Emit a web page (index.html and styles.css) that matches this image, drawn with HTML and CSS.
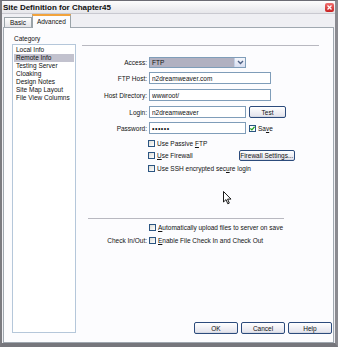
FILE: index.html
```html
<!DOCTYPE html>
<html lang="en">
<head>
<meta charset="UTF-8">
<title>Site Definition for Chapter45</title>
<link rel="stylesheet" href="styles.css">
</head>
<body>
<div class="window">
  <div class="titlebar">
    <span class="title">Site Definition for Chapter45</span>
    <span class="close">
      <svg width="9" height="9" viewBox="0 0 9 9"><path d="M2.5 2.5 L6.5 6.5 M6.5 2.5 L2.5 6.5" stroke="#fff" stroke-width="1.3"/></svg>
    </span>
  </div>
  <div class="tabs">
    <span class="tab">Basic</span>
    <span class="tab active">Advanced</span>
  </div>
  <div class="panel">
    <div class="sidebar">
      <div class="cat">Category</div>
      <ul class="list">
        <li>Local Info</li>
        <li class="sel">Remote Info</li>
        <li>Testing Server</li>
        <li>Cloaking</li>
        <li>Design Notes</li>
        <li>Site Map Layout</li>
        <li>File View Columns</li>
      </ul>
    </div>
    <div class="main">
      <div class="rule"></div>

      <div class="row r-access">
        <span class="lbl">Access:</span>
        <span class="select"><span class="val">FTP</span><span class="arrow"><svg width="7" height="5" viewBox="0 0 7 5"><path d="M1 1 L3.5 3.5 L6 1" fill="none" stroke="#4d6185" stroke-width="1.4"/></svg></span></span>
      </div>
      <div class="row r-host">
        <span class="lbl">FTP Host:</span>
        <input class="field wide" type="text" value="n2dreamweaver.com">
      </div>
      <div class="row r-dir">
        <span class="lbl">Host Directory:</span>
        <input class="field wide" type="text" value="wwwroot/">
      </div>
      <div class="row r-login">
        <span class="lbl">Login:</span>
        <input class="field" type="text" value="n2dreamweaver">
        <button class="btn test">Test</button>
      </div>
      <div class="row r-pass">
        <span class="lbl">Password:</span>
        <input class="field" type="password" value="secret">
        <span class="box on"><svg width="5" height="5" viewBox="0 0 5 5"><path d="M0.4 2.4 L1.9 3.9 L4.6 0.8" fill="none" stroke="#21a121" stroke-width="1.3"/></svg></span>
        <span class="txt">Sa<u>v</u>e</span>
      </div>

      <div class="opts">
        <div class="opt"><span class="box"></span><span class="txt">Use Passive <u>F</u>TP</span></div>
        <div class="opt"><span class="box"></span><span class="txt"><u>U</u>se Firewall</span><button class="btn fw">Firewall Settings...</button></div>
        <div class="opt"><span class="box"></span><span class="txt">Use SSH encrypted sec<u>u</u>re login</span></div>
      </div>

      <div class="rule short"></div>

      <div class="row r-auto">
        <span class="lbl"></span>
        <span class="box"></span><span class="txt"><u>A</u>utomatically upload files to server on save</span>
      </div>
      <div class="row r-check">
        <span class="lbl">Check In/Out:</span>
        <span class="box"></span><span class="txt"><u>E</u>nable File Check In and Check Out</span>
      </div>

      <div class="footer">
        <button class="btn">OK</button>
        <button class="btn">Cancel</button>
        <button class="btn">Help</button>
      </div>
    </div>
  </div>
  <svg class="cursor" width="9" height="14" viewBox="0 0 9 14"><path d="M0.5 0.5 L0.5 11 L3 8.6 L4.8 12.8 L6.3 12.1 L4.6 8.1 L8 8.1 Z" fill="#fff" stroke="#000" stroke-width="0.9"/></svg>
</div>
</body>
</html>
```
FILE: styles.css
```css
body {
margin: 0;
font-family: "Liberation Sans", Arial, sans-serif;
font-size: 6.5px;
color: #111;
background: #fff;
}

.window {
position: relative;
width: 338px;
height: 347px;
box-sizing: border-box;
border-left: 2px solid #7b7b80;
border-right: 3px solid #8a8a90;
border-bottom: 4px solid #76767c;
border-top: 1px solid #6c6c74;
background: #efeff3;
display: flex;
flex-direction: column;
}

.titlebar {
height: 12px;
display: flex;
align-items: center;
justify-content: space-between;
padding: 0 1px;
background: linear-gradient(#fdfdfd, #e6e6ea);
border-bottom: 1px solid #c9c9d0;
}

.title {
font-weight: bold;
font-size: 8px;
color: #101010;
}

.close {
width: 9px;
height: 9px;
border-radius: 2px;
background: linear-gradient(#f07070, #c82020);
display: flex;
}

/* tabs */
.tabs {
height: 13px;
display: flex;
align-items: flex-end;
padding-left: 2px;
}

.tab {
height: 9px;
line-height: 9px;
padding: 0 5px;
border: 1px solid #9aa3a8;
border-bottom: none;
background: linear-gradient(#fdfdfd, #e4e4e8);
}

.tab.active {
height: 12px;
line-height: 12px;
padding: 0 4px;
border-top: 2px solid #f2a33c;
background: #fcfcfe;
margin-bottom: -1px;
position: relative;
}

.panel {
flex: 1;
display: flex;
margin: 0 1px;
border: 1px solid #a0a8b0;
background: #fcfcfe;
}

.sidebar {
padding: 6px 0 0 8px;
display: flex;
flex-direction: column;
}

.cat {
height: 10px;
line-height: 10px;
padding-left: 2px;
}

.list {
list-style: none;
margin: 0 0 9px;
padding: 1px 1px;
width: 64px;
flex: 1;
box-sizing: border-box;
border: 1px solid #b5c7da;
background: #fff;
}

.list li {
height: 8px;
line-height: 8px;
padding-left: 2px;
}

.list li.sel {
background: #c2c2ce;
}

/* main column */
.main {
flex: 1;
display: flex;
flex-direction: column;
padding: 17px 1px 8px 6px;
}

.rule {
height: 1px;
background: #b8b8c0;
width: 237px;
}

.rule.short {
width: 196px;
margin: 43px 0 0 6px;
}

.row {
display: flex;
align-items: center;
height: 12px;
margin-top: 5px;
}

.lbl {
width: 65px;
margin-right: 2px;
text-align: right;
}

.r-access { margin-top: 11px; height: 11px; }
.r-host { margin-top: 4px; }
.r-pass { margin-top: 4px; }

.select {
width: 97px;
height: 11px;
box-sizing: border-box;
border: 1px solid #7f9db9;
background: #fff;
display: flex;
}

.select .val {
flex: 1;
background: #b1b1c1;
padding-left: 2px;
line-height: 9px;
margin: 0;
}

.select .arrow {
width: 10px;
display: flex;
align-items: center;
justify-content: center;
background: linear-gradient(#f4f6fb, #d8def0);
border-left: 1px solid #c3d0e6;
}

.field {
width: 97px;
height: 12px;
box-sizing: border-box;
border: 1px solid #7f9db9;
padding: 0 2px;
margin: 0;
font: inherit;
color: #111;
background: #fff;
}

.field.wide { width: 122px; }

input[type="password"] {
font-size: 7px;
letter-spacing: 0.5px;
}

.btn {
height: 12px;
box-sizing: border-box;
border: 1px solid #2c4b7c;
border-radius: 2px;
background: linear-gradient(#ffffff, #e6e6ee 85%, #cfd3de);
font: inherit;
color: #111;
padding: 0;
margin: 0;
}

.test {
width: 37px;
margin-left: 3px;
}

.box {
width: 7px;
height: 7px;
box-sizing: border-box;
border: 1px solid #2b5582;
background: linear-gradient(135deg, #dcdcd6, #fff);
display: inline-flex;
flex: none;
}

.box.on { background: #fff; }

.r-pass .box { margin-left: 3px; }

.txt { margin-left: 2px; }

.opts {
margin: 3px 0 0 66px;
}

.opt {
display: flex;
align-items: center;
height: 12px;
margin-bottom: 0.5px;
}

.fw {
width: 56px;
height: 11px;
margin-left: 46px;
}

.r-auto { margin-top: 4px; height: 10px; }
.r-auto .lbl, .r-check .lbl { width: 65px; margin-right: 2px; }
.r-check { margin-top: 3px; height: 10px; }

.footer {
margin-top: auto;
display: flex;
justify-content: flex-end;
gap: 3px;
}

.footer .btn { width: 44px; }

.cursor {
position: absolute;
left: 221px;
top: 190px;
}
```
